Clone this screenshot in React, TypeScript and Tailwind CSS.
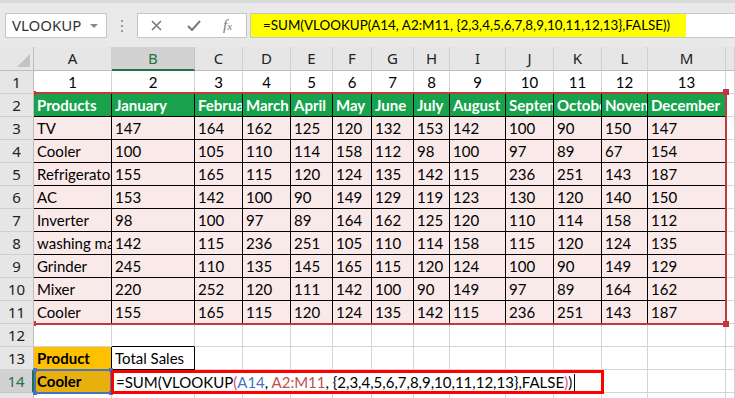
import React from 'react';

const cellFont = { fontFamily: 'Lato, "Noto Sans", sans-serif' };
const uiFont = { fontFamily: '"Noto Sans", "Open Sans", sans-serif' };

const letters = ['A', 'B', 'C', 'D', 'E', 'F', 'G', 'H', 'I', 'J', 'K', 'L', 'M', ''];

const head = ['Products', 'January', 'February', 'March', 'April', 'May', 'June', 'July', 'August', 'September', 'October', 'November', 'December'];

const data: (string | number)[][] = [
  ['TV', 147, 164, 162, 125, 120, 132, 153, 142, 100, 90, 150, 147],
  ['Cooler', 100, 105, 110, 114, 158, 112, 98, 100, 97, 89, 67, 154],
  ['Refrigerator', 155, 165, 115, 120, 124, 135, 142, 115, 236, 251, 143, 187],
  ['AC', 153, 142, 100, 90, 149, 129, 119, 123, 130, 120, 140, 150],
  ['Inverter', 98, 100, 97, 89, 164, 162, 125, 120, 110, 114, 158, 112],
  ['washing machine', 142, 115, 236, 251, 105, 110, 114, 158, 115, 120, 124, 135],
  ['Grinder', 245, 110, 135, 145, 165, 115, 120, 124, 100, 90, 149, 129],
  ['Mixer', 220, 252, 120, 111, 142, 100, 90, 149, 97, 89, 164, 162],
  ['Cooler', 155, 165, 115, 120, 124, 135, 142, 115, 236, 251, 143, 187],
];

function cellContent(r: number, c: number): string {
  if (c > 12) return '';
  if (r === 1) return String(c + 1);
  if (r === 2) return head[c];
  if (r >= 3 && r <= 11) return String(data[r - 3][c]);
  if (r === 13 && c === 0) return 'Product';
  if (r === 13 && c === 1) return 'Total Sales';
  if (r === 14 && c === 0) return 'Cooler';
  return '';
}

function cellClass(r: number, c: number): string {
  const base = 'h-[23px] overflow-hidden whitespace-nowrap flex items-center border-r border-b text-[15px] text-black';
  if (r >= 2 && r <= 11 && c <= 12) {
    if (r === 2) return `${base} border-black bg-[#17a24b] pl-[3px] font-bold text-white`;
    return `${base} border-black bg-[#f9e9e9] pl-[3px]`;
  }
  if (r === 1) return `${base} border-[#d4d4d4] justify-center`;
  if (r === 12 && c === 1) return `${base} border-r-[#d4d4d4] border-b-black`;
  if (r === 13 && c === 0) return `${base} border-black bg-[#ffc000] pl-[3px] font-bold`;
  if (r === 13 && c === 1) return `${base} border-black pl-[3px]`;
  if (r === 14 && c === 0) return `${base} border-[#d4d4d4] bg-[#e7b00f] pl-[3px] font-bold`;
  return `${base} border-[#d4d4d4]`;
}

function FormulaText() {
  return (
    <span className="whitespace-pre">
      =SUM(VLOOKUP<span className="text-[#dc4a7a]">(</span>
      <span className="text-[#4472c4]">A14</span>
      {', '}
      <span className="text-[#c0504d]">A2:M11</span>
      {', {2,3,4,5,6,7,8,9,10,11,12,13},FALSE'}
      <span className="text-[#dc4a7a]">)</span>)
    </span>
  );
}

export default function App() {
  const rows = Array.from({ length: 15 }, (_, i) => i + 1);

  return (
    <div className="h-[398px] w-[735px] overflow-hidden bg-white" style={cellFont}>
      {/* formula bar */}
      <div className="flex h-[47px] items-start border-t-[3px] border-[#dadada] bg-[#e9e9e9] pt-[10px]" style={uiFont}>
        <div className="ml-[5px] flex h-[25px] w-[102px] items-center justify-between border border-[#c6c6c6] bg-white pl-[6px] pr-[8px] text-[15px] text-[#333]">
          <span>VLOOKUP</span>
          <span className="h-0 w-0 border-x-[4px] border-t-[4px] border-x-transparent border-t-[#8a8a8a]" />
        </div>
        <div className="flex w-[30px] flex-col items-center gap-[3px] pt-[7px]">
          <span className="h-[2px] w-[2px] bg-[#9a9a9a]" />
          <span className="h-[2px] w-[2px] bg-[#9a9a9a]" />
          <span className="h-[2px] w-[2px] bg-[#9a9a9a]" />
        </div>
        <div className="flex h-[25px] w-[110px] items-center border border-[#c6c6c6] bg-white text-[#777]">
          <svg className="ml-[13px]" width="11" height="11" viewBox="0 0 11 11">
            <path d="M1 1 L10 10 M10 1 L1 10" stroke="#7a7a7a" strokeWidth="1.6" />
          </svg>
          <svg className="ml-[25px]" width="14" height="11" viewBox="0 0 14 11">
            <path d="M1 6 L5 10 L13 1" fill="none" stroke="#7a7a7a" strokeWidth="2" />
          </svg>
          <span className="ml-[22px] text-[15px] italic" style={{ fontFamily: '"Liberation Serif", serif' }}>
            f<span className="text-[11px]">x</span>
          </span>
        </div>
        <div className="ml-[3px] flex h-[25px] flex-1 items-center border border-r-0 border-[#c6c6c6] bg-white">
          <div className="flex h-full w-[435px] items-center bg-[#ffff00] pl-[12px] text-[13.4px] text-black" style={cellFont}>
            =SUM(VLOOKUP(A14, A2:M11, {'{'}2,3,4,5,6,7,8,9,10,11,12,13{'}'},FALSE))
          </div>
        </div>
      </div>

      {/* sheet */}
      <div className="relative">
        <div className="grid grid-cols-[34px_78px_83px_48px_48px_42px_39px_42px_36px_56px_48px_48px_46px_78px_9px]">
          {/* column headers */}
          <div className="relative h-[24px] border-r border-b border-[#bdbdbd] bg-[#e6e6e6]">
            <span className="absolute right-[3px] bottom-[3px] h-0 w-0 border-l-[13px] border-t-[13px] border-l-transparent border-t-transparent border-r-0 border-b-[13px] border-b-[#c3c3c3]" />
          </div>
          {letters.map((l, i) => (
            <div
              key={'h' + i}
              className={
                i === 1
                  ? 'flex h-[24px] items-center justify-center border-r border-b-2 border-r-[#c4c4c4] border-b-[#217346] bg-[#d2d2d2] text-[15px] text-[#217346]'
                  : 'flex h-[24px] items-center justify-center border-r border-b border-r-[#d0d0d0] border-b-[#bdbdbd] bg-[#e6e6e6] text-[15px] text-[#222]'
              }
              style={uiFont}
            >
              {l}
            </div>
          ))}

          {rows.map((r) => (
            <React.Fragment key={r}>
              <div
                className={
                  r === 14
                    ? 'flex h-[23px] items-center justify-center border-r-2 border-b border-r-[#217346] border-b-[#c4c4c4] bg-[#d2d2d2] text-[15px] text-[#217346]'
                    : 'flex h-[23px] items-center justify-center border-r border-b border-r-[#bdbdbd] border-b-[#d0d0d0] bg-[#e6e6e6] text-[15px] text-[#222]'
                }
                style={uiFont}
              >
                {r}
              </div>
              {letters.map((_, c) => (
                <div key={c} className={cellClass(r, c)}>
                  {cellContent(r, c)}
                </div>
              ))}
            </React.Fragment>
          ))}
        </div>

        {/* range marquee A2:M11 */}
        <div className="absolute left-[35px] top-[45px] h-[233px] w-[692px] border-t-2 border-r-2 border-b-2 border-[#c0393f]" />
        <span className="absolute left-[34px] top-[44px] h-[5px] w-[2px] bg-[#c0393f]" />
        <span className="absolute left-[34px] top-[274px] h-[5px] w-[2px] bg-[#c0393f]" />
        <span className="absolute left-[723px] top-[42px] h-[6px] w-[6px] bg-[#c0393f]" />
        <span className="absolute left-[723px] top-[274px] h-[6px] w-[6px] bg-[#c0393f]" />

        {/* A14 reference box */}
        <div className="absolute left-[34px] top-[322px] h-[25px] w-[78px] border-2 border-[#4472c4]" />
        <span className="absolute left-[33px] top-[321px] h-[4px] w-[4px] bg-[#4472c4]" />
        <span className="absolute left-[109px] top-[321px] h-[4px] w-[4px] bg-[#4472c4]" />
        <span className="absolute left-[33px] top-[344px] h-[4px] w-[4px] bg-[#4472c4]" />
        <span className="absolute left-[109px] top-[344px] h-[4px] w-[4px] bg-[#4472c4]" />

        {/* cell editor B14 */}
        <div className="absolute left-[111px] top-[323px] flex h-[24px] w-[493px] items-center border-[3px] border-[#ff0000] bg-white pl-[2px] text-[15px] text-black">
          <FormulaText />
          <span className="ml-[2px] h-[17px] w-px bg-black" />
        </div>
      </div>
    </div>
  );
}
